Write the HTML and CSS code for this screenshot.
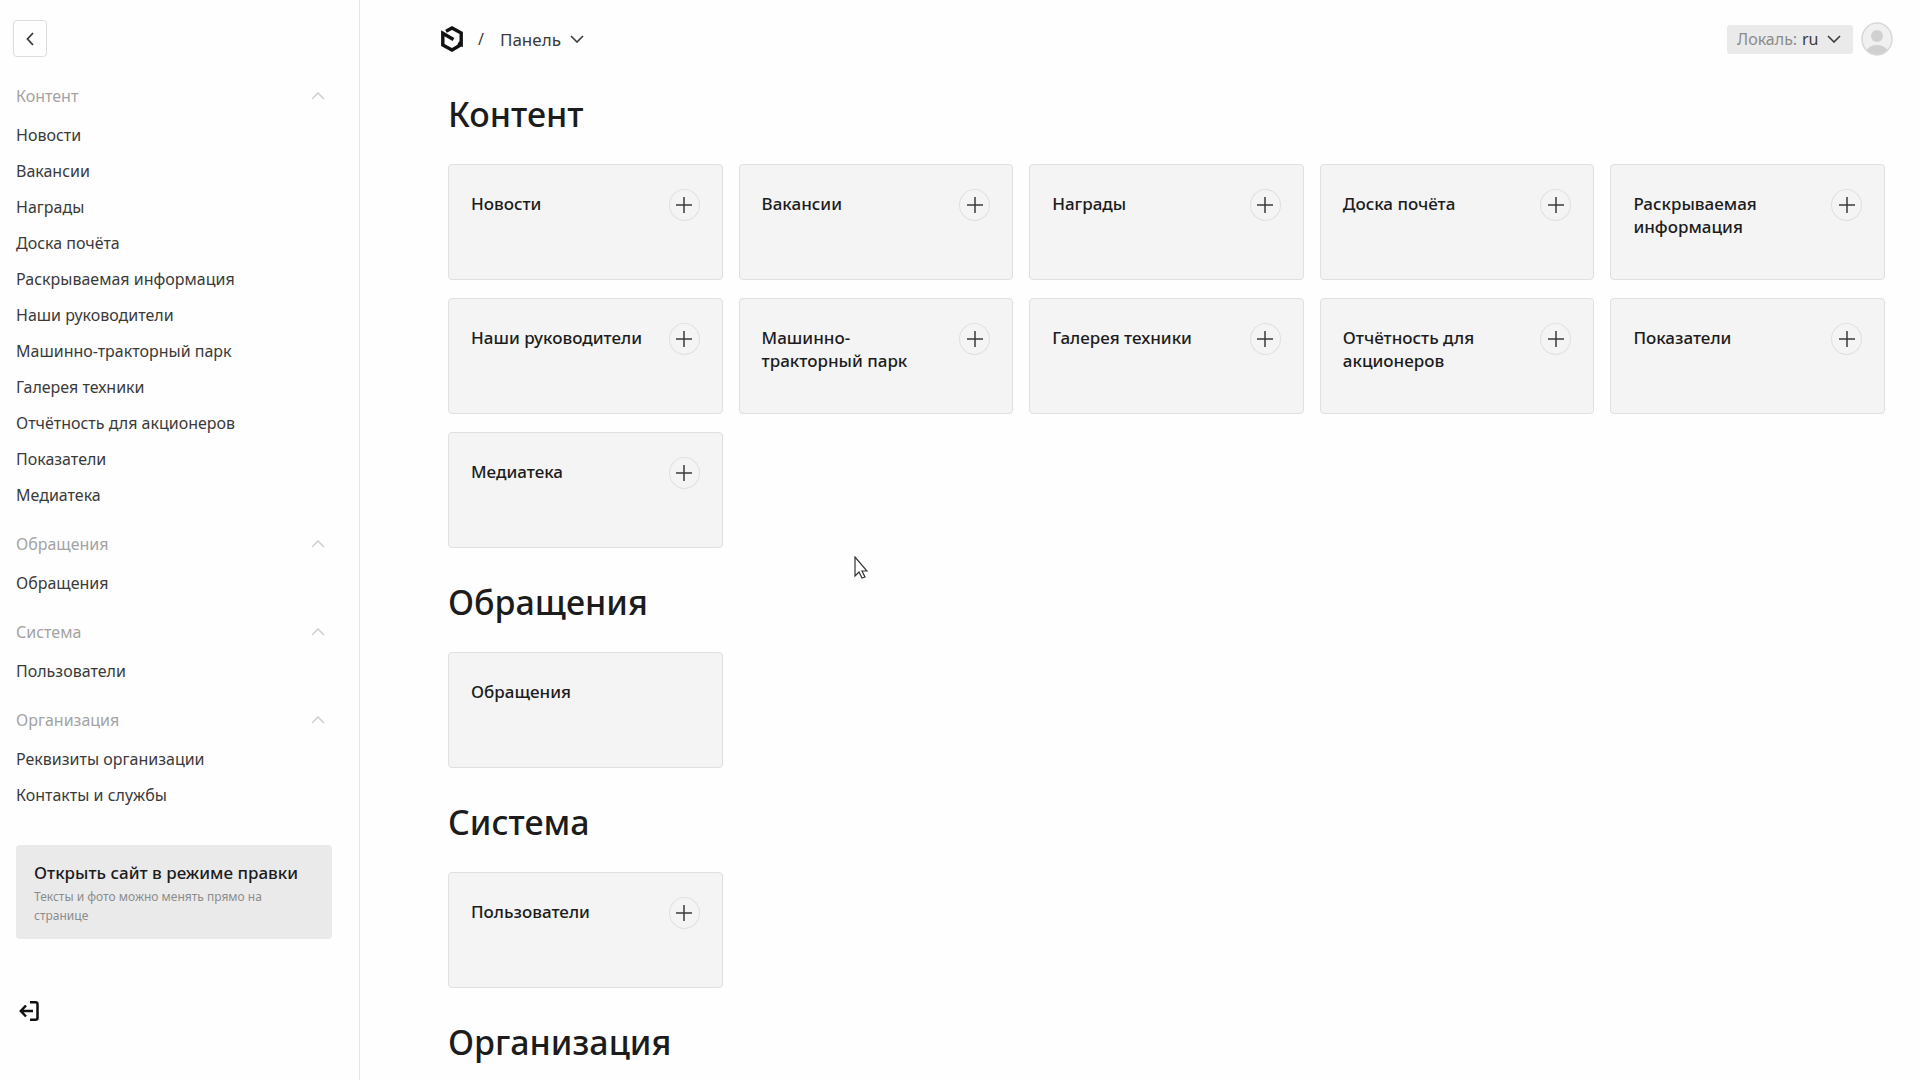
FILE: index.html
```html
<!DOCTYPE html>
<html lang="ru">
<head>
  <meta charset="UTF-8" />
  <meta name="viewport" content="width=device-width, initial-scale=1.0"/>
  <title>Панель</title>
  <link rel="stylesheet" href="styles.css">
</head>
<body>

  <!-- Shared icons -->
  <svg class="sprite" aria-hidden="true">
    <symbol id="icon-up" viewBox="0 0 14 8"><path d="M1 7l6-6 6 6" fill="none" stroke="currentColor" stroke-width="1.5"/></symbol>
    <symbol id="icon-down" viewBox="0 0 14 8"><path d="M1 1l6 6 6-6" fill="none" stroke="currentColor" stroke-width="1.6"/></symbol>
    <symbol id="icon-plus" viewBox="0 0 16 16"><path d="M8 0v16M0 8h16" fill="none" stroke="currentColor" stroke-width="1.5"/></symbol>
  </svg>

  <div class="layout">
    <aside class="sidebar">
      <button class="collapse-btn" aria-label="Свернуть меню">
        <svg width="8" height="14" viewBox="0 0 8 14"><path d="M7 1L1.500 7 7 13" fill="none" stroke="currentColor" stroke-width="1.8"/></svg>
      </button>

      <nav class="nav">
        <section class="nav-group">
          <button class="nav-title">Контент <svg class="chevron"><use href="#icon-up"/></svg></button>
          <ul>
            <li><a href="#">Новости</a></li>
            <li><a href="#">Вакансии</a></li>
            <li><a href="#">Награды</a></li>
            <li><a href="#">Доска почёта</a></li>
            <li><a href="#">Раскрываемая информация</a></li>
            <li><a href="#">Наши руководители</a></li>
            <li><a href="#">Машинно-тракторный парк</a></li>
            <li><a href="#">Галерея техники</a></li>
            <li><a href="#">Отчётность для акционеров</a></li>
            <li><a href="#">Показатели</a></li>
            <li><a href="#">Медиатека</a></li>
          </ul>
        </section>
        <section class="nav-group">
          <button class="nav-title">Обращения <svg class="chevron"><use href="#icon-up"/></svg></button>
          <ul>
            <li><a href="#">Обращения</a></li>
          </ul>
        </section>
        <section class="nav-group">
          <button class="nav-title">Система <svg class="chevron"><use href="#icon-up"/></svg></button>
          <ul>
            <li><a href="#">Пользователи</a></li>
          </ul>
        </section>
        <section class="nav-group">
          <button class="nav-title">Организация <svg class="chevron"><use href="#icon-up"/></svg></button>
          <ul>
            <li><a href="#">Реквизиты организации</a></li>
            <li><a href="#">Контакты и службы</a></li>
          </ul>
        </section>
      </nav>

      <a href="#" class="edit-link">
        <strong>Открыть сайт в режиме правки</strong>
        <span>Тексты и фото можно менять прямо на странице</span>
      </a>

      <button class="logout-btn" aria-label="Выйти">
        <svg width="20" height="20" viewBox="0 0 20 20" fill="none" stroke="currentColor" stroke-width="2.500"><path d="M11 1.300h5.500a2 2 0 0 1 2 2v13.400a2 2 0 0 1-2 2H11"/><path d="M14 10H2M7 4.500L1.800 10 7 15.500"/></svg>
      </button>
    </aside>

    <main class="main">
      <header class="top-bar">
        <a href="#" class="logo" aria-label="Главная">
          <svg width="24" height="26" viewBox="0 0 24 26" fill="none" stroke="currentColor" stroke-width="3.400"><path d="M6 5.200L12 2l9.200 5v11.500l-3-1.600"/><path d="M13.500 13.500L2.800 7.200V19L12 24l8.500-5"/></svg>
        </a>
        <span class="slash">/</span>
        <button class="menu-btn">Панель <svg class="chevron"><use href="#icon-down"/></svg></button>

        <div class="locale">
          <label for="locale">Локаль:</label>
          <select id="locale">
            <option>ru</option>
          </select>
          <svg class="chevron"><use href="#icon-down"/></svg>
        </div>
        <button class="avatar" aria-label="Профиль">
          <svg width="32" height="34" viewBox="0 0 32 34"><defs><clipPath id="face"><ellipse cx="16" cy="17" rx="15" ry="16"/></clipPath></defs><ellipse cx="16" cy="17" rx="15" ry="16" fill="#f0f0f0"/><g clip-path="url(#face)" fill="#d0d0d0"><circle cx="16" cy="14" r="6"/><ellipse cx="16" cy="31" rx="11" ry="8"/></g><ellipse cx="16" cy="17" rx="15" ry="16" fill="none" stroke="#d8d8d8" stroke-width="1.500"/></svg>
        </button>
      </header>

      <!-- Content -->
      <section class="group">
        <h2>Контент</h2>
        <div class="cards">
          <div class="card"><a href="#">Новости</a><button aria-label="Добавить"><svg><use href="#icon-plus"/></svg></button></div>
          <div class="card"><a href="#">Вакансии</a><button aria-label="Добавить"><svg><use href="#icon-plus"/></svg></button></div>
          <div class="card"><a href="#">Награды</a><button aria-label="Добавить"><svg><use href="#icon-plus"/></svg></button></div>
          <div class="card"><a href="#">Доска почёта</a><button aria-label="Добавить"><svg><use href="#icon-plus"/></svg></button></div>
          <div class="card"><a href="#">Раскрываемая информация</a><button aria-label="Добавить"><svg><use href="#icon-plus"/></svg></button></div>
          <div class="card"><a href="#">Наши руководители</a><button aria-label="Добавить"><svg><use href="#icon-plus"/></svg></button></div>
          <div class="card"><a href="#">Машинно-тракторный парк</a><button aria-label="Добавить"><svg><use href="#icon-plus"/></svg></button></div>
          <div class="card"><a href="#">Галерея техники</a><button aria-label="Добавить"><svg><use href="#icon-plus"/></svg></button></div>
          <div class="card"><a href="#">Отчётность для акционеров</a><button aria-label="Добавить"><svg><use href="#icon-plus"/></svg></button></div>
          <div class="card"><a href="#">Показатели</a><button aria-label="Добавить"><svg><use href="#icon-plus"/></svg></button></div>
          <div class="card"><a href="#">Медиатека</a><button aria-label="Добавить"><svg><use href="#icon-plus"/></svg></button></div>
        </div>
      </section>

      <!-- Requests -->
      <section class="group">
        <h2>Обращения</h2>
        <div class="cards">
          <div class="card"><a href="#">Обращения</a></div>
        </div>
      </section>

      <!-- System -->
      <section class="group">
        <h2>Система</h2>
        <div class="cards">
          <div class="card"><a href="#">Пользователи</a><button aria-label="Добавить"><svg><use href="#icon-plus"/></svg></button></div>
        </div>
      </section>

      <!-- Organization -->
      <section class="group">
        <h2>Организация</h2>
      </section>
    </main>
  </div>

  <svg class="pointer" width="14" height="23" viewBox="0 0 14 23"><path d="M1 1v19l4-4 3 6 3-1-3-6h5z" fill="#fff" stroke="#333" stroke-width="1.200"/></svg>

</body>
</html>
```
FILE: styles.css
```css
* {
  box-sizing: border-box;
}

body {
  margin: 0;
  font-family: "Noto Sans", "Open Sans", sans-serif;
  font-size: 16px;
  color: #3a3a3a;
  background: #fefefe;
}

a {
  color: inherit;
  text-decoration: none;
}

button, select {
  font: inherit;
  color: inherit;
  background: none;
  border: none;
  padding: 0;
  cursor: pointer;
}

ul {
  list-style: none;
  margin: 0;
  padding: 0;
}

svg {
  display: block;
  flex-shrink: 0;
}

.sprite {
  display: none;
}

.chevron {
  width: 14px;
  height: 8px;
}

.layout {
  display: flex;
  min-height: 100vh;
}

/* Sidebar */
.sidebar {
  width: 360px;
  flex-shrink: 0;
  padding: 20px 27px 20px 16px;
  border-right: 1px solid #e4e4e4;
}

.collapse-btn {
  display: flex;
  align-items: center;
  justify-content: center;
  width: 34px;
  height: 37px;
  margin-left: -3px;
  border: 1px solid #dcdcdc;
  border-radius: 4px;
}

.nav {
  margin-top: 17px;
}

.nav-group {
  margin-bottom: 9px;
}

.nav-title {
  display: flex;
  align-items: center;
  justify-content: space-between;
  width: 100%;
  height: 43px;
  padding-right: 7px;
  color: #a3a3a3;
}

.nav-title .chevron {
  color: #cfcfcf;
}

.nav-group li {
  line-height: 36px;
}

.edit-link {
  display: block;
  margin-top: 32px;
  padding: 16px 18px 14px;
  border-radius: 4px;
  background: #eaeaea;
}

.edit-link strong {
  display: block;
  font-size: 17px;
  font-weight: 500;
  line-height: 24px;
  color: #1c1c1c;
}

.edit-link span {
  display: block;
  margin-top: 2px;
  font-size: 12px;
  line-height: 19px;
  color: #8c8c8c;
}

.logout-btn {
  margin: 62px 0 0 3px;
  color: #111;
}

/* Main */
.main {
  flex: 1;
  padding: 18px 35px 0 88px;
}

.top-bar {
  display: flex;
  align-items: center;
  height: 42px;
  margin: 0 -8px 0 -8px;
}

.logo {
  color: #111;
}

.slash {
  margin: 0 16px 0 14px;
}

.menu-btn {
  display: flex;
  align-items: center;
  gap: 9px;
  font-size: 17px;
}

.locale {
  display: flex;
  align-items: center;
  height: 29px;
  margin-left: auto;
  padding: 0 12px 0 10px;
  border-radius: 3px;
  background: #eaeaea;
}

.locale label {
  color: #8c8c8c;
}

.locale select {
  appearance: none;
  margin: 0 8px 0 5px;
}

.avatar {
  margin-left: 8px;
}

.group h2 {
  margin: 0;
  padding: 28px 0 24px;
  font-size: 34px;
  font-weight: 500;
  line-height: 52px;
  color: #1c1c1c;
}

.cards {
  display: grid;
  grid-template-columns: repeat(5, 1fr);
  gap: 18px 16px;
}

.card {
  display: flex;
  align-items: flex-start;
  justify-content: space-between;
  gap: 20px;
  min-height: 116px;
  padding: 24px 22px;
  border: 1px solid #e0e0e0;
  border-radius: 4px;
  background: #f4f4f4;
}

.card a {
  margin-top: 3px;
  font-size: 17px;
  font-weight: 500;
  line-height: 23px;
  color: #1c1c1c;
}

.card button {
  display: flex;
  align-items: center;
  justify-content: center;
  width: 31px;
  height: 32px;
  flex-shrink: 0;
  border: 1px solid #e0e0e0;
  border-radius: 50%;
}

.card button svg {
  width: 16px;
  height: 16px;
}

.pointer {
  position: absolute;
  left: 854px;
  top: 556px;
}
```
